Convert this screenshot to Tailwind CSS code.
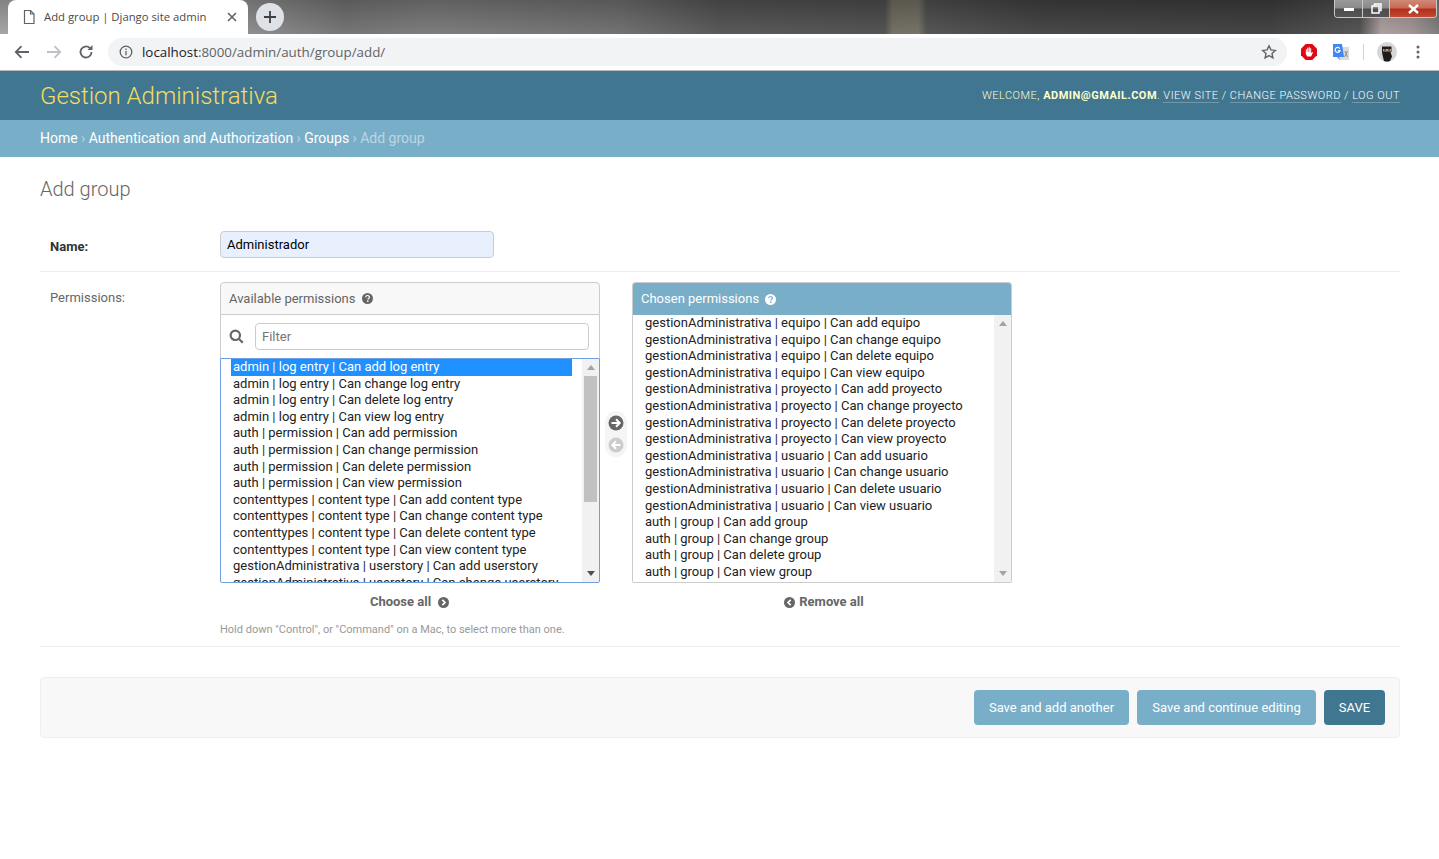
<!DOCTYPE html>
<html lang="en">
<head>
<meta charset="utf-8"/>
<title>Add group | Django site admin</title>
<script src="https://cdn.jsdelivr.net/npm/@tailwindcss/browser@4"></script>
</head>
<body class="bg-white font-['Roboto',sans-serif] text-[#333] h-[859px] overflow-hidden">

<!-- browser tab strip -->
<div class="h-[34px] flex items-start relative bg-[linear-gradient(180deg,rgba(0,0,0,.18),rgba(255,255,255,.06)),linear-gradient(90deg,#a0a0a0_0%,#8a8a8a_17%,#6e6e6e_24%,#767676_30%,#6a6a6a_43%,#505050_50%,#4a4a4a_61.5%,#6c6a5c_62%,#6e6c60_63.8%,#4c4c4c_64.4%,#3e3e3e_72%,#3a3a3a_88%,#4c4c4c_94.5%,#a89a9a_96%,#a09090_98%,#777_100%)]">
  <div class="ml-[8px] w-[240px] h-[34px] bg-white rounded-t-[8px] flex items-center pl-[14px] pr-[10px] font-['Open_Sans',sans-serif] text-[11.300px] text-[#4a4a4a]">
    <svg width="14" height="16" viewBox="0 0 14 16" fill="none" stroke="#5f6368" stroke-width="1.2"><path d="M2.500 1.500h6l3.500 3.500v9.500h-9.500z"/><path d="M8.500 1.500v3.500h3.500"/></svg>
    <span class="ml-[8px] flex-1 whitespace-nowrap">Add group | Django site admin</span>
    <svg class="mr-[1px]" width="10" height="10" viewBox="0 0 10 10" stroke="#5f6368" stroke-width="1.600"><path d="M1 1l8 8M9 1l-8 8"/></svg>
  </div>
  <div class="ml-[8px] mt-[3px] w-[28px] h-[28px] rounded-full bg-[#dee1e6] flex items-center justify-center">
    <svg width="14" height="14" viewBox="0 0 14 14" stroke="#3c4043" stroke-width="1.800"><path d="M7 1v12M1 7h12"/></svg>
  </div>
  <!-- window buttons -->
  <div class="absolute right-[2px] top-0 w-[103px] h-[18px] flex border border-t-0 border-[#c8c8c8] rounded-b-[4px] overflow-hidden">
    <div class="w-[28px] h-full bg-[linear-gradient(#9a9a9a,#8a8a8a_45%,#4e4e4e_55%,#555)] flex items-center justify-center border-r border-[#c8c8c8]"><div class="w-[10px] h-[3px] mt-[2px] bg-white"></div></div>
    <div class="w-[27px] h-full bg-[linear-gradient(#9a9a9a,#8a8a8a_45%,#4e4e4e_55%,#555)] flex items-center justify-center border-r border-[#c8c8c8]">
      <svg width="11" height="11" viewBox="0 0 11 11" fill="none" stroke="#fff" stroke-width="1.500"><path d="M3.500 2.500V1h6.500v6.500H8"/><rect x="1" y="3" width="7" height="7"/></svg>
    </div>
    <div class="flex-1 h-full bg-[linear-gradient(#d08a78,#c96a55_45%,#b3301a_55%,#c24a32)] flex items-center justify-center">
      <svg width="11" height="10" viewBox="0 0 11 10" stroke="#fff" stroke-width="2.400"><path d="M1 1l9 8M10 1l-9 8"/></svg>
    </div>
  </div>
</div>

<!-- browser toolbar -->
<div class="h-[37px] pb-[1px] bg-white flex items-center relative border-b border-[#b9b9b9]">
  <div class="w-[108px] shrink-0 flex items-center pl-[14px] gap-[16px]">
    <svg width="16" height="14" viewBox="0 0 16 14" fill="none" stroke="#5f6368" stroke-width="1.800"><path d="M15 7H2M7.500 1.200L1.800 7l5.700 5.800"/></svg>
    <svg width="16" height="14" viewBox="0 0 16 14" fill="none" stroke="#bdc1c6" stroke-width="1.800"><path d="M1 7h13M8.500 1.200L14.200 7l-5.700 5.800"/></svg>
    <svg width="16" height="16" viewBox="0 0 16 16" fill="none"><path d="M13.500 8a5.500 5.500 0 1 1-1.700-4" stroke="#5f6368" stroke-width="1.800"/><path d="M14.500 1v5h-5z" fill="#5f6368"/></svg>
  </div>
  <div class="w-[1179px] h-[28px] rounded-full bg-[#f1f3f4] flex items-center pl-[11px] pr-[10px]">
    <svg width="14" height="14" viewBox="0 0 14 14" fill="none" stroke="#5f6368" stroke-width="1.300"><circle cx="7" cy="7" r="5.800"/><path d="M7 6v4.200M7 3.600v1.300"/></svg>
    <span class="ml-[9px] flex-1 pt-[1px] font-['Open_Sans',sans-serif] text-[13.350px] text-[#5f6368]"><span class="text-[#202124]">localhost</span>:8000/admin/auth/group/add/</span>
    <svg width="16" height="16" viewBox="0 0 16 16" fill="none" stroke="#5f6368" stroke-width="1.400"><path d="M8 1.800l1.900 4.100 4.400.5-3.300 3 .9 4.400L8 11.600l-3.900 2.200.9-4.400-3.300-3 4.400-.5z"/></svg>
  </div>
  <div class="flex-1 flex items-center pl-[14px]">
    <svg width="16" height="16" viewBox="0 0 16 16"><path d="M4.700 0h6.600L16 4.700v6.600L11.300 16H4.700L0 11.300V4.700z" fill="#e30613"/><path d="M4.800 8V5.200h1V8h.4V3.800h1.100V8h.4V3.200h1.100V8h.4V4.200h1V9.300l1-1.200.8.500-1.900 3.900H6.200L4.800 10z" fill="#fff"/></svg>
    <svg class="ml-[16px]" width="16" height="16" viewBox="0 0 16 16"><rect x="6" y="3" width="10" height="13" fill="#d9dbdd"/><path d="M12 7l2.500 6M14.500 7l-3 6" stroke="#8a8f94" stroke-width="1"/><path d="M0 0h9l2 13H6l1 3-3-3H0z" fill="#4285f4"/><path d="M6.800 4.700a2.500 2.500 0 1 0 .2 2H5" fill="none" stroke="#fff" stroke-width="1.200"/></svg>
    <div class="ml-[14px] w-px h-[16px] bg-[#d0d2d4]"></div>
    <svg class="ml-[13px]" width="20" height="20" viewBox="0 0 20 20"><circle cx="10" cy="10" r="10" fill="#d6d6d6"/><path d="M5 4.500h9.500V10h-1l1.500 4.500-2 4.500q-3 1-6 0l-1.500-6L5 10z" fill="#1c1c1c"/><rect x="6" y="7" width="8" height="2.500" fill="#c49a6c"/><path d="M7 8h2M11 8h2" stroke="#1c1c1c"/></svg>
    <svg class="ml-[19px]" width="4" height="14" viewBox="0 0 4 14" fill="#5f6368"><circle cx="2" cy="2" r="1.500"/><circle cx="2" cy="7" r="1.500"/><circle cx="2" cy="12" r="1.500"/></svg>
  </div>
</div>

<!-- django header -->
<header class="h-[49px] bg-[#417690] flex items-center justify-between pl-[40px] pr-[39px]">
  <div class="text-[24px] font-light text-[#f5dd5d]">Gestion Administrativa</div>
  <div class="pt-[1px] text-[11px] tracking-[0.5px] uppercase text-[#ffc] font-light">Welcome, <strong class="font-bold">admin@gmail.com</strong>. <a class="border-b border-white/25 text-white">View site</a> / <a class="border-b border-white/25 text-white">Change password</a> / <a class="border-b border-white/25 text-white">Log out</a></div>
</header>
<div class="h-[37px] bg-[#79aec8] flex items-center px-[40px] text-[14px] text-white/50">
  <a class="text-white">Home</a><span class="mx-[3.400px]">›</span><a class="text-white">Authentication and Authorization</a><span class="mx-[3.400px]">›</span><a class="text-white">Groups</a><span class="mx-[3.400px]">›</span>Add group
</div>

<main class="pl-[40px] pr-[39px]">
  <h1 class="pt-[20px] text-[20px] leading-[24px] font-light text-[#666]">Add group</h1>

  <!-- name row -->
  <div class="mt-[18px] h-[53px] border-b border-[#eee] flex items-start pl-[10px] pt-[12px]">
    <label class="w-[170px] pt-[8px] text-[13px] font-bold leading-[16px]">Name:</label>
    <div class="w-[274px] h-[27px] rounded-[4px] border border-[#ccc] bg-[#e8f0fe] pl-[6px] text-[13px] leading-[25px] text-black">Administrador</div>
  </div>

  <!-- permissions row -->
  <div class="h-[375px] border-b border-[#eee] pl-[10px] pt-[10px] flex items-start">
    <label class="w-[170px] pt-[8px] text-[13px] leading-[16px] text-[#666]">Permissions:</label>
    <div>
      <div class="flex items-start">
        <!-- available -->
        <div class="w-[380px]">
          <div class="h-[33px] bg-[#f8f8f8] border border-[#ccc] rounded-t-[4px] flex items-center pl-[8px] text-[13px] text-[#666]">
            Available permissions
            <svg class="ml-[7px]" width="11" height="11" viewBox="0 0 11 11"><circle cx="5.500" cy="5.500" r="5.500" fill="#666"/><path d="M3.700 4.200c.1-2.300 3.800-2.200 3.700 0 0 1.300-1.500 1.200-1.500 2.200" fill="none" stroke="#fff" stroke-width="1.200"/><rect x="5" y="7.400" width="1.500" height="1.500" fill="#fff"/></svg>
          </div>
          <div class="h-[43px] border-x border-[#ccc] flex items-center pl-[8px]">
            <svg width="15" height="15" viewBox="0 0 15 15" fill="none" stroke="#666" stroke-width="2.200"><circle cx="6.300" cy="6.300" r="4.700"/><path d="M9.800 9.800l4 4"/></svg>
            <div class="ml-[11px] w-[334px] h-[27px] rounded-[4px] border border-[#ccc] pl-[6px] text-[13px] leading-[25px] text-[#757575]">Filter</div>
          </div>
          <div class="h-[225px] border border-[#6f9fe0] rounded-b-[2px] flex overflow-hidden text-[13px] leading-[16.600px] text-[#222]">
            <div class="w-[361px] pl-[10px] pr-[10px] overflow-hidden whitespace-nowrap">
              <div class="bg-[#1e90ff] text-white pl-[2px]">admin | log entry | Can add log entry</div>
              <div class="pl-[2px]">admin | log entry | Can change log entry</div>
              <div class="pl-[2px]">admin | log entry | Can delete log entry</div>
              <div class="pl-[2px]">admin | log entry | Can view log entry</div>
              <div class="pl-[2px]">auth | permission | Can add permission</div>
              <div class="pl-[2px]">auth | permission | Can change permission</div>
              <div class="pl-[2px]">auth | permission | Can delete permission</div>
              <div class="pl-[2px]">auth | permission | Can view permission</div>
              <div class="pl-[2px]">contenttypes | content type | Can add content type</div>
              <div class="pl-[2px]">contenttypes | content type | Can change content type</div>
              <div class="pl-[2px]">contenttypes | content type | Can delete content type</div>
              <div class="pl-[2px]">contenttypes | content type | Can view content type</div>
              <div class="pl-[2px]">gestionAdministrativa | userstory | Can add userstory</div>
              <div class="pl-[2px]">gestionAdministrativa | userstory | Can change userstory</div>
            </div>
            <div class="w-[17px] bg-[#f1f1f1] flex flex-col items-center">
              <div class="h-[17px] flex items-center justify-center"><div class="border-x-[4px] border-x-transparent border-b-[5px] border-b-[#a3a3a3]"></div></div>
              <div class="w-[13px] h-[126px] bg-[#c1c1c1]"></div>
              <div class="flex-1"></div>
              <div class="h-[17px] flex items-center justify-center"><div class="border-x-[4px] border-x-transparent border-t-[5px] border-t-[#505050]"></div></div>
            </div>
          </div>
          <div class="mt-[11px] flex items-center justify-center text-[13px] leading-[16px] font-bold text-[#666]">
            <span class="-translate-x-px">Choose all</span>
            <svg class="ml-[6px] mt-[1px]" width="11" height="11" viewBox="0 0 11 11"><circle cx="5.500" cy="5.500" r="5.500" fill="#666"/><path d="M4.300 2.800l2.700 2.700-2.700 2.700" fill="none" stroke="#fff" stroke-width="1.700"/></svg>
          </div>
        </div>

        <!-- move arrows -->
        <div class="w-[32px] flex justify-center pt-[129px]">
          <div class="w-[22px] h-[46px] rounded-[11px] bg-[#f5f5f5] flex flex-col items-center justify-between py-[4px]">
            <svg width="16" height="16" viewBox="0 0 16 16"><circle cx="8" cy="8" r="7.500" fill="#666"/><path d="M3.500 8h8M8 4.300L11.700 8 8 11.700" fill="none" stroke="#fff" stroke-width="2"/></svg>
            <svg width="16" height="16" viewBox="0 0 16 16"><circle cx="8" cy="8" r="7.500" fill="#ccc"/><path d="M12.500 8h-8M8 4.300L4.300 8 8 11.700" fill="none" stroke="#fff" stroke-width="2"/></svg>
          </div>
        </div>

        <!-- chosen -->
        <div class="w-[380px]">
          <div class="h-[33px] bg-[#79aec8] border border-[#ccc] border-b-0 rounded-t-[4px] flex items-center pl-[8px] text-[13px] text-white">
            Chosen permissions
            <svg class="ml-[6px]" width="11" height="11" viewBox="0 0 11 11"><circle cx="5.500" cy="5.500" r="5.500" fill="#fff"/><path d="M3.700 4.200c.1-2.300 3.800-2.200 3.700 0 0 1.300-1.500 1.200-1.500 2.200" fill="none" stroke="#79aec8" stroke-width="1.200"/><rect x="5" y="7.400" width="1.500" height="1.500" fill="#79aec8"/></svg>
          </div>
          <div class="h-[268px] border border-t-0 border-[#ccc] rounded-b-[2px] flex overflow-hidden text-[13px] leading-[16.600px] text-[#222]">
            <div class="w-[361px] pl-[12px] overflow-hidden whitespace-nowrap">
              <div>gestionAdministrativa | equipo | Can add equipo</div>
              <div>gestionAdministrativa | equipo | Can change equipo</div>
              <div>gestionAdministrativa | equipo | Can delete equipo</div>
              <div>gestionAdministrativa | equipo | Can view equipo</div>
              <div>gestionAdministrativa | proyecto | Can add proyecto</div>
              <div>gestionAdministrativa | proyecto | Can change proyecto</div>
              <div>gestionAdministrativa | proyecto | Can delete proyecto</div>
              <div>gestionAdministrativa | proyecto | Can view proyecto</div>
              <div>gestionAdministrativa | usuario | Can add usuario</div>
              <div>gestionAdministrativa | usuario | Can change usuario</div>
              <div>gestionAdministrativa | usuario | Can delete usuario</div>
              <div>gestionAdministrativa | usuario | Can view usuario</div>
              <div>auth | group | Can add group</div>
              <div>auth | group | Can change group</div>
              <div>auth | group | Can delete group</div>
              <div>auth | group | Can view group</div>
            </div>
            <div class="w-[17px] bg-[#f1f1f1] flex flex-col justify-between items-center">
              <div class="h-[17px] flex items-center justify-center"><div class="border-x-[4px] border-x-transparent border-b-[5px] border-b-[#a3a3a3]"></div></div>
              <div class="h-[17px] flex items-center justify-center"><div class="border-x-[4px] border-x-transparent border-t-[5px] border-t-[#a3a3a3]"></div></div>
            </div>
          </div>
          <div class="mt-[11px] pl-[4px] flex items-center justify-center text-[13px] leading-[16px] font-bold text-[#666]">
            <svg class="mr-[4px] mt-[1px]" width="11" height="11" viewBox="0 0 11 11"><circle cx="5.500" cy="5.500" r="5.500" fill="#666"/><path d="M6.700 2.800L4 5.500l2.700 2.700" fill="none" stroke="#fff" stroke-width="1.700"/></svg>
            Remove all
          </div>
        </div>
      </div>
      <p class="mt-[13px] text-[11px] leading-[14px] text-[#999]">Hold down "Control", or "Command" on a Mac, to select more than one.</p>
    </div>
  </div>

  <!-- submit row -->
  <div class="mt-[30px] h-[61px] bg-[#f8f8f8] border border-[#eee] rounded-[4px] flex items-center justify-end gap-[8px] pr-[14px] text-[13px] text-white">
    <div class="h-[35px] w-[155px] rounded-[4px] bg-[#79aec8] flex items-center justify-center">Save and add another</div>
    <div class="h-[35px] w-[179px] rounded-[4px] bg-[#79aec8] flex items-center justify-center">Save and continue editing</div>
    <div class="h-[35px] w-[61px] rounded-[4px] bg-[#417690] flex items-center justify-center">SAVE</div>
  </div>
</main>
</body>
</html>
